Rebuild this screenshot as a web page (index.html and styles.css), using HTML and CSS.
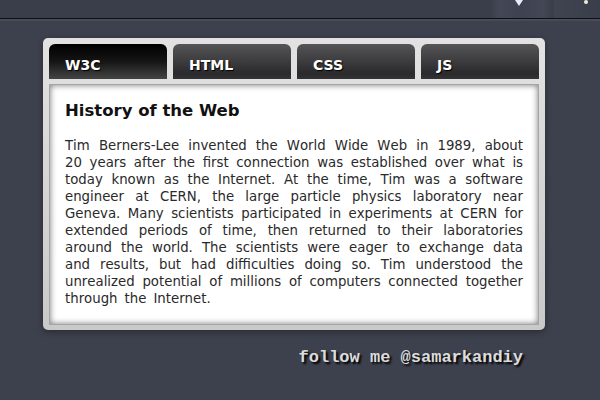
FILE: index.html
```html
<!DOCTYPE html>
<html lang="en">
<head>
    <meta charset="UTF-8">
    <title>Tabs</title>
    <link rel="stylesheet" href="styles.css">
</head>
<body>
    <div class="top-bar">
        <div class="top-slot">
            <span class="top-arrow"></span>
        </div>
        <div class="top-slot small">
            <span class="top-dot"></span>
        </div>
    </div>

    <div class="page">
        <div class="tabs">
            <ul class="tab-list">
                <li class="tab active">W3C</li>
                <li class="tab">HTML</li>
                <li class="tab">CSS</li>
                <li class="tab">JS</li>
            </ul>
            <div class="tab-content">
                <h2>History of the Web</h2>
                <p>Tim Berners-Lee invented the World Wide Web in 1989, about 20 years after the first connection was established over what is today known as the Internet. At the time, Tim was a software engineer at CERN, the large particle physics laboratory near Geneva. Many scientists participated in experiments at CERN for extended periods of time, then returned to their laboratories around the world. The scientists were eager to exchange data and results, but had difficulties doing so. Tim understood the unrealized potential of millions of computers connected together through the Internet.</p>
            </div>
        </div>
        <div class="follow">follow me @samarkandiy</div>
    </div>
</body>
</html>
```

FILE: styles.css
```css
* {
    box-sizing: border-box;
}
body {
    margin: 0;
    background-color: #3d414d;
    font-family: "DejaVu Sans", Verdana, sans-serif;
    height: 400px;
    overflow: hidden;
}
.top-bar {
    height: 19px;
    background-color: #3a3e4a;
    border-bottom: 1px solid #0e0f12;
    box-shadow: 0 1px 0 #4b4f5b, 0 2px 0 #464a56;
    display: flex;
    justify-content: flex-end;
}
.top-slot {
    width: 62px;
    margin-right: 2px;
    background: linear-gradient(to right, #3a3e4a, #444856 15%, #3e4250 50%, #444856 85%, #3a3e4a);
    position: relative;
}
.top-slot.small {
    width: 46px;
    margin-right: 0;
    background: linear-gradient(to right, #404450, #3a3e4a);
}
.top-arrow {
    position: absolute;
    left: 25px;
    top: 0;
    border-left: 4px solid transparent;
    border-right: 4px solid transparent;
    border-top: 6px solid #e8ecf4;
}
.top-dot {
    position: absolute;
    left: 30px;
    top: 0;
    width: 4px;
    height: 4px;
    border-radius: 50%;
    background-color: #f0ecd8;
}
.page {
    padding-top: 19px;
    width: 502px;
    margin-left: 43px;
}
.tabs {
    background: linear-gradient(#e2e2e2, #c9c9c9);
    border-radius: 5px;
    padding: 6px 6px 5px;
    box-shadow: 0 2px 6px rgba(0, 0, 0, 0.35);
}
.tab-list {
    list-style: none;
    margin: 0 0 5px;
    padding: 0;
    display: flex;
    gap: 6px;
}
.tab {
    width: 118px;
    height: 35px;
    padding: 13px 0 0 16px;
    border-radius: 6px 6px 0 0;
    background: linear-gradient(#555558, #2a2a2c 85%, #333336);
    color: #fff;
    font-size: 14px;
    font-weight: bold;
    text-shadow: 1px 1px 1px #000;
}
.tab.active {
    background: linear-gradient(#000, #151515 50%, #444 100%);
}
.tab-content {
    height: 241px;
    background-color: #fff;
    border: 1px solid #a5a5a5;
    box-shadow: inset 0 0 6px rgba(0, 0, 0, 0.55);
    padding: 16px 15px 0 15px;
    color: #222;
}
h2 {
    margin: 0;
    font-size: 16.5px;
    line-height: 19px;
    font-weight: bold;
    color: #111;
}
p {
    margin: 17px 0 0;
    font-size: 13.3px;
    line-height: 17px;
    word-spacing: 2.8px;
    font-kerning: none;
    text-align: justify;
    color: #2a2a2a;
}
.follow {
    margin-top: 18px;
    padding-right: 22px;
    text-align: right;
    font-family: "Liberation Mono", "Courier New", monospace;
    font-weight: bold;
    font-size: 17px;
    color: #dcdcdc;
    text-shadow: 2px 2px 2px #000;
}
```
